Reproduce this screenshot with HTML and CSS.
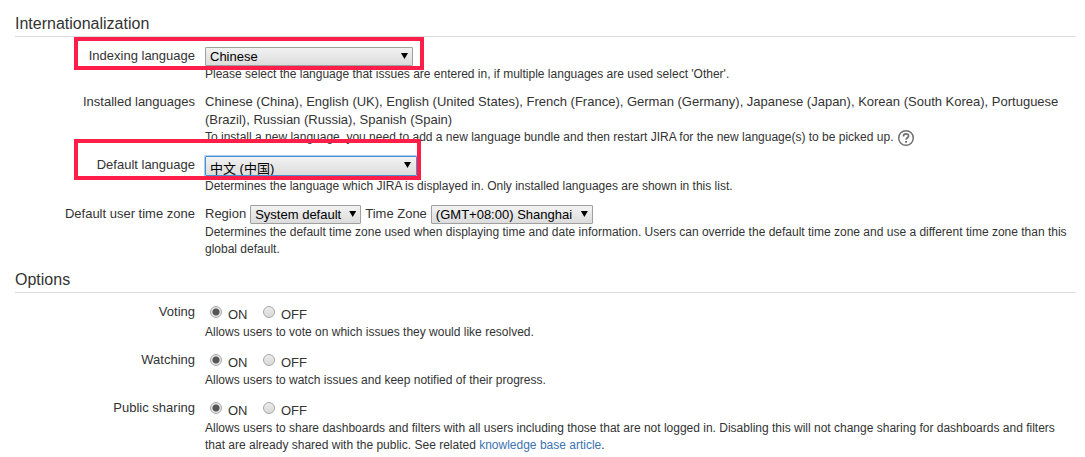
FILE: index.html
```html
<!DOCTYPE html>
<html lang="en">
<head>
<meta charset="utf-8">
<title>General configuration</title>
<link rel="stylesheet" href="styles.css">
</head>
<body>
<form class="settings">
  <section class="group">
    <h2 class="group-title">Internationalization</h2>
    <div class="row">
      <label class="name" for="indexing">Indexing language</label>
      <div class="field">
        <span class="picker picker-indexing"><select id="indexing"><option>Chinese</option></select></span>
        <p class="hint">Please select the language that issues are entered in, if multiple languages are used select 'Other'.</p>
      </div>
      <span class="marker marker-indexing"></span>
    </div>
    <div class="row">
      <span class="name">Installed languages</span>
      <div class="field">
        <p class="value">Chinese (China), English (UK), English (United States), French (France), German (Germany), Japanese (Japan), Korean (South Korea), Portuguese (Brazil), Russian (Russia), Spanish (Spain)</p>
        <p class="hint">To install a new language, you need to add a new language bundle and then restart JIRA for the new language(s) to be picked up. <a class="help" href="#" aria-label="Help"><svg width="18" height="18" viewBox="0 0 18 18" fill="none" stroke="#707070"><circle cx="9" cy="9" r="7.3" stroke-width="1.5"/><path d="M6.4 7.4c0-1.6 1.1-2.6 2.6-2.6s2.6.9 2.6 2.2c0 1.7-2.5 1.8-2.5 3.8" stroke-width="1.7"/><path d="M8.1 12.8h1.9" stroke-width="1.8"/></svg></a></p>
      </div>
    </div>
    <div class="row">
      <label class="name" for="language">Default language</label>
      <div class="field">
        <span class="picker picker-language"><select id="language"><option>中文 (中国)</option></select></span>
        <p class="hint">Determines the language which JIRA is displayed in. Only installed languages are shown in this list.</p>
      </div>
      <span class="marker marker-language"></span>
    </div>
    <div class="row">
      <span class="name">Default user time zone</span>
      <div class="field">
        <div class="zone">
          <label for="region">Region</label>
          <span class="picker picker-region"><select id="region"><option>System default</option></select></span>
          <label for="zone">Time Zone</label>
          <span class="picker picker-zone"><select id="zone"><option>(GMT+08:00) Shanghai</option></select></span>
        </div>
        <p class="hint">Determines the default time zone used when displaying time and date information. Users can override the default time zone and use a different time zone than this global default.</p>
      </div>
    </div>
  </section>
  <section class="group">
    <h2 class="group-title">Options</h2>
    <div class="row">
      <span class="name" id="voting">Voting</span>
      <div class="field">
        <div class="choices" role="radiogroup" aria-labelledby="voting">
          <input type="radio" name="voting" id="voting-on" checked><label for="voting-on">ON</label>
          <input type="radio" name="voting" id="voting-off"><label for="voting-off">OFF</label>
        </div>
        <p class="hint">Allows users to vote on which issues they would like resolved.</p>
      </div>
    </div>
    <div class="row">
      <span class="name" id="watching">Watching</span>
      <div class="field">
        <div class="choices" role="radiogroup" aria-labelledby="watching">
          <input type="radio" name="watching" id="watching-on" checked><label for="watching-on">ON</label>
          <input type="radio" name="watching" id="watching-off"><label for="watching-off">OFF</label>
        </div>
        <p class="hint">Allows users to watch issues and keep notified of their progress.</p>
      </div>
    </div>
    <div class="row">
      <span class="name" id="sharing">Public sharing</span>
      <div class="field">
        <div class="choices" role="radiogroup" aria-labelledby="sharing">
          <input type="radio" name="sharing" id="sharing-on" checked><label for="sharing-on">ON</label>
          <input type="radio" name="sharing" id="sharing-off"><label for="sharing-off">OFF</label>
        </div>
        <p class="hint">Allows users to share dashboards and filters with all users including those that are not logged in. Disabling this will not change sharing for dashboards and filters that are already shared with the public. See related <a href="#">knowledge base article</a>.</p>
      </div>
    </div>
  </section>
</form>
</body>
</html>
```
FILE: styles.css
```css
* {
  box-sizing: border-box;
}

body {
  margin: 0;
  background: #fff;
  color: #333;
  font: 13px/18px "Liberation Sans", Arial, "Noto Sans CJK SC", sans-serif;
}

.settings {
  padding: 12px 9px 0 15px;
}

.group {
  margin-bottom: 10px;
}

.group-title {
  margin: 0;
  border-bottom: 1px solid #ddd;
  font-size: 16px;
  font-weight: 400;
  line-height: 24px;
}

.row {
  position: relative;
  display: grid;
  grid-template-columns: 180px minmax(0, 1fr);
  column-gap: 10px;
  margin-top: 10px;
}

.name {
  text-align: right;
}

.value,
.hint {
  margin: 0;
}

.hint {
  font-size: 12px;
  line-height: 17px;
}

a {
  color: #3b73af;
  text-decoration: none;
}

.help svg {
  margin: -4px 0;
  vertical-align: middle;
}

.picker {
  position: relative;
  display: block;
  height: 19px;
}

.picker::after {
  content: "";
  position: absolute;
  top: 6px;
  right: 5px;
  width: 7px;
  height: 6px;
  background: #000;
  clip-path: polygon(0 0, 100% 0, 50% 100%);
  pointer-events: none;
}

.picker select {
  appearance: none;
  display: block;
  width: 100%;
  height: 100%;
  margin: 0;
  padding: 0 4px;
  border: 1px solid #a0a0a0;
  border-radius: 1px;
  background: linear-gradient(#f2f2f2, #dcdcdc);
  color: #000;
  font: 13px/17px "Liberation Sans", Arial, "Noto Sans CJK SC", sans-serif;
}

.picker-indexing {
  width: 208px;
}

.picker-language {
  width: 212px;
  height: 20px;
  margin-bottom: 2px;
}

.picker-language::after {
  right: 6px;
}

.picker-language select {
  padding-top: 3px;
  border-color: #4a90d0;
  box-shadow: 0 0 0 1px #a6cdf0;
}

.picker-region {
  width: 111px;
}

.picker-zone {
  width: 162px;
}

.zone {
  display: flex;
  gap: 4px;
}

.choices {
  display: grid;
  grid-template-columns: 12px 29px 12px auto;
  column-gap: 6px;
  justify-content: start;
  height: 21px;
  padding: 3px 0 0 5px;
}

.choices input {
  appearance: none;
  width: 12px;
  height: 12px;
  margin: 0;
  border: 1px solid #a8a8a8;
  border-radius: 50%;
  background: linear-gradient(#ececec, #d8d8d8);
}

.choices input:checked {
  background: radial-gradient(circle, #555 0 3px, #e4e4e4 4px);
}

.marker {
  position: absolute;
  left: 59px;
  border: 4px solid #ff1d4a;
  pointer-events: none;
}

.marker-indexing {
  top: -10px;
  width: 350px;
  height: 33px;
}

.marker-language {
  top: -17px;
  width: 347px;
  height: 41px;
}
```
